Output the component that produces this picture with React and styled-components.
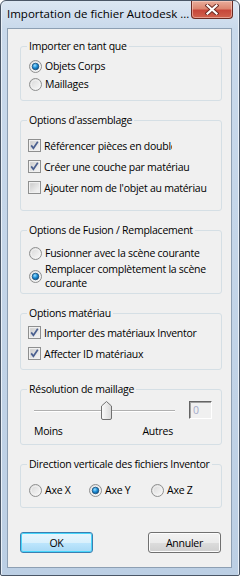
import React from 'react';
import styled, { createGlobalStyle } from 'styled-components';

const GlobalStyle = createGlobalStyle`
  html, body {
    margin: 0;
    padding: 0;
    background: #ffffff;
  }
  * {
    box-sizing: border-box;
  }
  svg {
    flex-shrink: 0;
  }
`;

const UI_FONT = `'Segoe UI', 'Open Sans', 'Liberation Sans', sans-serif`;

// FRAME
const Window = styled.div`
  width: 240px;
  height: 576px;
  display: flex;
  flex-direction: column;
  padding: 0 7px 7px 6px;
  border: 1px solid #4a5666;
  border-radius: 6px 6px 2px 2px;
  background: linear-gradient(180deg, #dbe6f2 0px, #c9d9eb 28px, #bccfe4 100%);
  box-shadow: inset 1px 0 0 #eaf1f9, inset -1px 0 0 #eaf1f9;
  font-family: ${UI_FONT};
  font-size: 10.5px;
  letter-spacing: -0.25px;
  color: #000;
`;

const TitleBar = styled.div`
  height: 27px;
  display: flex;
  justify-content: space-between;
  align-items: flex-start;
`;

const Title = styled.span`
  padding-top: 6px;
  font-size: 11.5px;
  letter-spacing: 0;
  line-height: 14px;
  color: #000;
  white-space: nowrap;
`;

const CloseButton = styled.div`
  width: 42px;
  height: 18px;
  margin-right: -1px;
  display: flex;
  align-items: center;
  justify-content: center;
  border: 1px solid #6b2a22;
  border-top: none;
  border-radius: 0 0 4px 4px;
  background: linear-gradient(180deg, #e9ad9b 0%, #dc8670 45%, #c7473a 55%, #d0624d 100%);
  box-shadow: inset 0 0 0 1px rgba(255, 220, 210, 0.5);
`;

const Client = styled.div`
  flex: 1;
  display: flex;
  flex-direction: column;
  gap: 12px;
  padding: 10px 9px 0 12px;
  border: 1px solid #8d9fb3;
  background: #f0f0f0;
`;

// GROUP BOXES
const Group = styled.fieldset`
  margin: 0;
  padding: ${(p) => p.$pt || 0}px 8px ${(p) => p.$pb || 0}px 8px;
  border: 1px solid #d5dfe5;
  border-radius: 3px;
  display: flex;
  flex-direction: column;
  gap: ${(p) => p.$gap || 0}px;
  min-width: 0;
`;

const Legend = styled.legend`
  margin-left: -2px;
  padding: 0 2px;
  line-height: 14px;
  white-space: nowrap;
`;

const Row = styled.label`
  display: flex;
  align-items: center;
  gap: 3px;
  height: ${(p) => p.$h || 14}px;
  line-height: 14px;
  white-space: nowrap;
  overflow: hidden;
  margin-left: ${(p) => p.$shift || 0}px;
`;

const MultiRow = styled.label`
  display: flex;
  align-items: center;
  gap: 3px;
  line-height: 14px;
  white-space: nowrap;
`;

const Clip = styled.span`
  display: block;
  max-width: ${(p) => p.$max}px;
  overflow: hidden;
  white-space: nowrap;
`;

const AxisRow = styled.div`
  display: grid;
  grid-template-columns: 60px 62px auto;
`;

// SLIDER
const SliderRow = styled.div`
  height: 19px;
  display: flex;
  align-items: flex-start;
  justify-content: space-between;
  padding-left: 5px;
  padding-right: 1px;
`;

const Track = styled.div`
  position: relative;
  width: 141px;
  height: 19px;
  &::before {
    content: '';
    position: absolute;
    left: 0;
    right: 0;
    top: 9px;
    height: 1px;
    background: #b0b0b0;
    box-shadow: 0 1px 0 #ffffff;
  }
`;

const Thumb = styled.svg`
  position: absolute;
  left: ${(p) => p.$left}px;
  top: 0;
`;

const ValueBox = styled.div`
  width: 23px;
  height: 18px;
  padding: 1px 0 0 3px;
  border: 1px solid;
  border-color: #646464 #ffffff #ffffff #646464;
  box-shadow: inset 1px 1px 0 #a0a0a0;
  color: #a3a9c9;
  line-height: 14px;
`;

const ScaleLabels = styled.div`
  display: flex;
  justify-content: space-between;
  width: 144px;
  padding-left: 5px;
  line-height: 14px;
`;

// BUTTONS
const ButtonBar = styled.div`
  display: flex;
  justify-content: space-between;
  margin-top: 12px;
  padding-right: 1px;
`;

const Button = styled.button`
  width: 73px;
  height: 21px;
  padding: 0;
  font-family: ${UI_FONT};
  font-size: 10.5px;
  letter-spacing: -0.25px;
  color: #000;
  border-radius: 3px;
  border: 1px solid ${(p) => (p.$default ? '#3c7fb1' : '#707070')};
  background: ${(p) =>
    p.$default
      ? 'linear-gradient(180deg, #eaf6fd 0%, #d9f0fc 50%, #bee6fd 50%, #a7d9f5 100%)'
      : 'linear-gradient(180deg, #f2f2f2 0%, #ebebeb 50%, #dddddd 50%, #cfcfcf 100%)'};
  box-shadow: inset 0 0 0 1px ${(p) => (p.$default ? '#48d6fb' : '#fcfcfc')};
`;

// ICONS
const Radio = ({ checked }) => (
  <svg width="13" height="13" viewBox="0 0 13 13">
    <defs>
      <linearGradient id="rbg" x1="0" y1="0" x2="1" y2="1">
        <stop offset="0" stopColor="#d5d5d5" />
        <stop offset="1" stopColor="#fcfcfc" />
      </linearGradient>
      <radialGradient id="rdot" cx="0.4" cy="0.35" r="0.7">
        <stop offset="0" stopColor="#9fe0ff" />
        <stop offset="0.5" stopColor="#1d8fd8" />
        <stop offset="1" stopColor="#0a4c84" />
      </radialGradient>
    </defs>
    <circle cx="6.5" cy="6.5" r="6" fill="url(#rbg)" stroke="#8e8f8f" />
    <circle cx="6.5" cy="6.5" r="4.3" fill="none" stroke="#f4f4f4" strokeWidth="0.8" />
    {checked && <circle cx="6.5" cy="6.5" r="3.3" fill="url(#rdot)" stroke="#1c4f79" strokeWidth="0.8" />}
  </svg>
);

const Check = ({ checked }) => (
  <svg width="13" height="13" viewBox="0 0 13 13">
    <defs>
      <linearGradient id="cbg" x1="0" y1="0" x2="1" y2="1">
        <stop offset="0" stopColor="#cbcbcb" />
        <stop offset="1" stopColor="#f7f7f7" />
      </linearGradient>
    </defs>
    <rect x="0.5" y="0.5" width="12" height="12" fill="#f4f4f4" stroke="#8e8f8f" />
    <rect x="2" y="2" width="9" height="9" fill="url(#cbg)" stroke="#e4e4e4" strokeWidth="0.5" />
    {checked && (
      <path d="M3.2 6.4 L5.4 9.2 L9.8 2.8" fill="none" stroke="#4a5f8f" strokeWidth="1.7" />
    )}
  </svg>
);

const CloseIcon = () => (
  <svg width="14" height="11" viewBox="0 0 14 11">
    <path d="M2.5 1.5 L11.5 9.5 M11.5 1.5 L2.5 9.5" stroke="#6b2a22" strokeWidth="4" strokeLinecap="square" />
    <path d="M2.5 1.5 L11.5 9.5 M11.5 1.5 L2.5 9.5" stroke="#ffffff" strokeWidth="2.2" strokeLinecap="square" />
  </svg>
);

const SliderThumb = ({ left }) => (
  <Thumb $left={left} width="11" height="19" viewBox="0 0 11 19">
    <defs>
      <linearGradient id="thg" x1="0" y1="0" x2="1" y2="0">
        <stop offset="0" stopColor="#fbfbfb" />
        <stop offset="1" stopColor="#d8d8d8" />
      </linearGradient>
    </defs>
    <path
      d="M0.5 5 L5.5 0.5 L10.5 5 L10.5 17 Q10.5 18.5 9 18.5 L2 18.5 Q0.5 18.5 0.5 17 Z"
      fill="url(#thg)"
      stroke="#707070"
    />
  </Thumb>
);

const App = () => (
  <>
    <GlobalStyle />
    <Window>
      <TitleBar>
        <Title>Importation de fichier Autodesk ...</Title>
        <CloseButton>
          <CloseIcon />
        </CloseButton>
      </TitleBar>
      <Client>
        <Group $pt={4} $pb={7}>
          <Legend>Importer en tant que</Legend>
          <Row $h={18}>
            <Radio checked />
            Objets Corps
          </Row>
          <Row $h={18}>
            <Radio />
            Maillages
          </Row>
        </Group>

        <Group $pt={8} $pb={12}>
          <Legend>Options d'assemblage</Legend>
          <Row $h={21} $shift={-1}>
            <Check checked />
            <Clip $max={128}>Référencer pièces en double</Clip>
          </Row>
          <Row $h={21} $shift={-1}>
            <Check checked />
            Créer une couche par matériau
          </Row>
          <Row $h={21} $shift={-1}>
            <Check />
            Ajouter nom de l'objet au matériau
          </Row>
        </Group>

        <Group $pt={9} $pb={3} $gap={2}>
          <Legend>Options de Fusion / Remplacement</Legend>
          <Row>
            <Radio />
            Fusionner avec la scène courante
          </Row>
          <MultiRow>
            <Radio checked />
            <span>
              Remplacer complètement la scène
              <br />
              courante
            </span>
          </MultiRow>
        </Group>

        <Group $pt={2} $pb={5}>
          <Legend>Options matériau</Legend>
          <Row $h={21} $shift={-1}>
            <Check checked />
            Importer des matériaux Inventor
          </Row>
          <Row $h={21} $shift={-1}>
            <Check checked />
            Affecter ID matériaux
          </Row>
        </Group>

        <Group $pt={5} $pb={6} $gap={4}>
          <Legend>Résolution de maillage</Legend>
          <SliderRow>
            <Track>
              <SliderThumb left={67} />
            </Track>
            <ValueBox>0</ValueBox>
          </SliderRow>
          <ScaleLabels>
            <span>Moins</span>
            <span>Autres</span>
          </ScaleLabels>
        </Group>

        <Group $pt={12} $pb={10}>
          <Legend>Direction verticale des fichiers Inventor</Legend>
          <AxisRow>
            <Row>
              <Radio />
              Axe X
            </Row>
            <Row>
              <Radio checked />
              Axe Y
            </Row>
            <Row>
              <Radio />
              Axe Z
            </Row>
          </AxisRow>
        </Group>

        <ButtonBar>
          <Button $default>OK</Button>
          <Button>Annuler</Button>
        </ButtonBar>
      </Client>
    </Window>
  </>
);

export default App;
